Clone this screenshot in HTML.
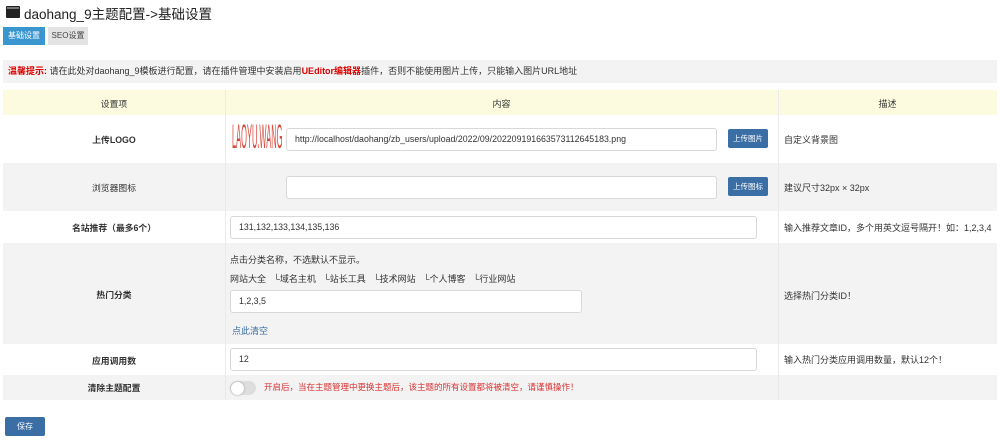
<!DOCTYPE html>
<html><head><meta charset="utf-8"><style>
*{box-sizing:border-box;margin:0;padding:0}
body{width:1000px;height:440px;background:#fff;font-family:"Liberation Sans","Noto Sans CJK SC",sans-serif;font-size:9px;color:#333;position:relative;overflow:hidden}
.a{position:absolute}
.inp{position:absolute;background:#fff;border:1px solid #d8d8d8;border-radius:3px;height:23px;line-height:21px;padding-left:8px;font-size:8.8px;color:#333}
.btn{position:absolute;background:#3a6ea5;color:#fff;border-radius:2px;font-size:7.5px;text-align:center}
.lab{position:absolute;left:3px;width:222px;text-align:center;font-weight:bold;font-size:8.8px}
.row{position:absolute;left:3px;width:994px}
.g{background:#f3f3f3}
.vl{position:absolute;top:90px;height:310px;width:1px;background:#eaeaea}
</style></head><body>
<div class="a" style="left:6px;top:6px;width:14px;height:12px;background:#222;border-radius:1px"><div style="margin:1px;height:2px;background:#777"></div></div>
<div class="a" style="left:24px;top:3px;font-size:13.5px;color:#222">daohang_9主题配置-&gt;基础设置</div>
<div class="a" style="left:3px;top:27px;width:42px;height:18px;background:#3a96cf;color:#fff;line-height:18px;text-align:center;font-size:8px">基础设置</div>
<div class="a" style="left:48px;top:27px;width:40px;height:18px;background:#e3e3e3;color:#444;line-height:18px;text-align:center;font-size:8px">SEO设置</div>
<div class="a" style="left:3px;top:60px;width:994px;height:23px;background:#f3f3f3;line-height:23px;padding-left:5px;font-size:9px"><b style="color:#d00">温馨提示:</b> 请在此处对daohang_9模板进行配置，请在插件管理中安装启用<b style="color:#d00">UEditor编辑器</b>插件，否则不能使用图片上传，只能输入图片URL地址</div>
<div class="row" style="top:90px;height:25px;background:#fdfbdf"></div>
<div class="row g" style="top:163px;height:48px"></div>
<div class="row g" style="top:243px;height:101px"></div>
<div class="row g" style="top:375px;height:25px"></div>
<div class="vl" style="left:225px"></div><div class="vl" style="left:778px"></div>
<div class="lab" style="top:97px;font-weight:normal">设置项</div>
<div class="a" style="left:225px;width:553px;top:97px;text-align:center">内容</div>
<div class="a" style="left:778px;width:219px;top:97px;text-align:center">描述</div>
<div class="lab" style="top:133px">上传LOGO</div>
<div class="a" style="left:232px;top:117px;font-size:34px;line-height:40px;color:#d8483a;white-space:nowrap;transform:scale(.22,1);transform-origin:left top">LAOYU.WANG</div>
<div class="inp" style="left:286px;top:128px;width:431px">http://localhost/daohang/zb_users/upload/2022/09/202209191663573112645183.png</div>
<div class="btn" style="left:728px;top:129px;width:40px;height:19px;line-height:19px">上传图片</div>
<div class="a" style="left:784px;top:133px">自定义背景图</div>
<div class="lab" style="top:181px;font-weight:normal">浏览器图标</div>
<div class="inp" style="left:286px;top:176px;width:431px"></div>
<div class="btn" style="left:728px;top:177px;width:40px;height:19px;line-height:19px">上传图标</div>
<div class="a" style="left:784px;top:181px">建议尺寸32px × 32px</div>
<div class="lab" style="top:221px">名站推荐（最多6个）</div>
<div class="inp" style="left:230px;top:216px;width:527px">131,132,133,134,135,136</div>
<div class="a" style="left:784px;top:221px">输入推荐文章ID，多个用英文逗号隔开！如：1,2,3,4</div>
<div class="lab" style="top:288px">热门分类</div>
<div class="a" style="left:230px;top:253px">点击分类名称，不选默认不显示。</div>
<div class="a" style="left:230px;top:272px">网站大全 &nbsp; └域名主机 &nbsp; └站长工具 &nbsp; └技术网站 &nbsp; └个人博客 &nbsp; └行业网站</div>
<div class="inp" style="left:230px;top:290px;width:352px">1,2,3,5</div>
<div class="a" style="left:232px;top:324px;color:#3a6ea5">点此清空</div>
<div class="a" style="left:784px;top:289px">选择热门分类ID！</div>
<div class="lab" style="top:354px">应用调用数</div>
<div class="inp" style="left:230px;top:348px;width:527px">12</div>
<div class="a" style="left:784px;top:353px">输入热门分类应用调用数量，默认12个！</div>
<div class="lab" style="top:381px">清除主题配置</div>
<div class="a" style="left:230px;top:381px;width:26px;height:14px;border-radius:7px;background:#ddd"><div style="width:13px;height:13px;border-radius:50%;background:#fff;box-shadow:0 0 2px #999;margin:.5px"></div></div>
<div class="a" style="left:264px;top:381px;color:#d33;font-size:8.5px">开启后，当在主题管理中更换主题后，该主题的所有设置都将被清空，请谨慎操作！</div>
<div class="btn" style="left:5px;top:417px;width:40px;height:19px;line-height:19px;font-size:8px">保存</div>
</body></html>
